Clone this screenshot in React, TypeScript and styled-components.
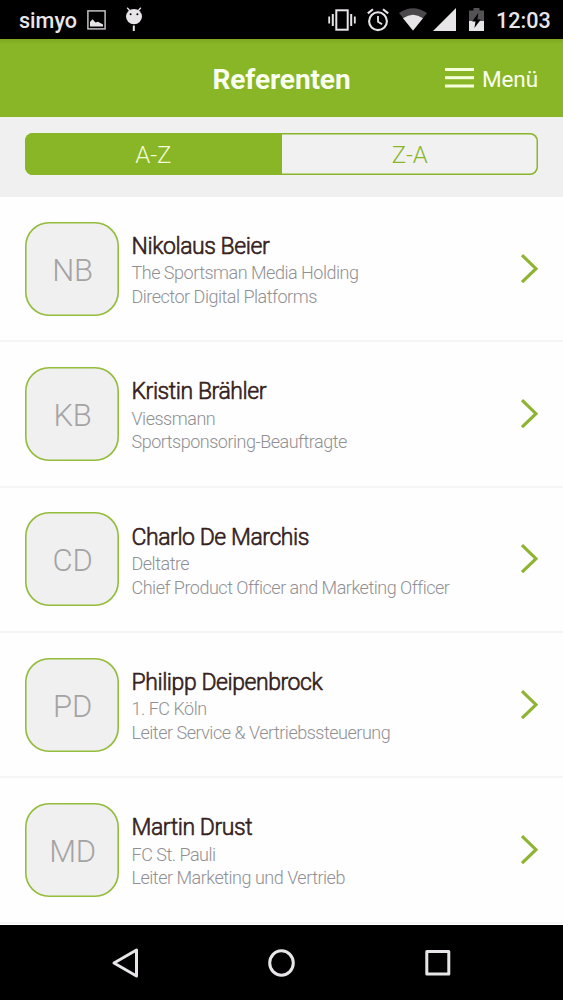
import React from 'react';
import styled, { createGlobalStyle } from 'styled-components';

const green = '#88b626';

const Global = createGlobalStyle`
  * { box-sizing: border-box; }
  body { margin: 0; background: #000; font-family: Roboto, "Liberation Sans", sans-serif; }
  svg { display: block; flex: none; }
`;

const Screen = styled.div`
  width: 563px;
  height: 1000px;
  display: flex;
  flex-direction: column;
  overflow: hidden;
  background: #fefefe;
`;

const StatusBar = styled.div`
  height: 39px;
  flex: none;
  display: flex;
  align-items: center;
  justify-content: space-between;
  padding: 0 12px 0 19px;
  background: #000;
  color: #e8e5e8;
`;

const StatusGroup = styled.div`
  display: flex;
  align-items: center;
  height: 39px;
`;

const StatusText = styled.span<{ $width: number }>`
  width: ${p => p.$width}px;
  font-size: 21.6px;
  line-height: 26px;
  font-weight: 500;
  white-space: nowrap;
  padding-top: 2px;
`;

const Clock = styled(StatusText)`
  margin-left: 12px;
`;

const Header = styled.header`
  height: 78px;
  flex: none;
  display: grid;
  grid-template-columns: 1fr auto 1fr;
  align-items: center;
  padding: 3px 25px 0;
  background: linear-gradient(#7da822, ${green} 5px);
  color: #fbffef;
`;

const Title = styled.h1`
  grid-column: 2;
  margin: 0;
  font-size: 28px;
  line-height: 34px;
  font-weight: 700;
  letter-spacing: -0.1px;
`;

const MenuButton = styled.div`
  justify-self: end;
  display: flex;
  align-items: center;
  gap: 8px;
  padding-bottom: 3px;
  font-size: 22.5px;
  line-height: 28px;
  white-space: nowrap;
`;

const MenuLabel = styled.span`
  padding-top: 1px;
  letter-spacing: -0.1px;
`;

const FilterBar = styled.div`
  height: 80px;
  flex: none;
  padding: 16px 25px 0;
  background: #f0f0f0;
`;

const Segments = styled.div`
  display: flex;
  height: 42px;
  border-radius: 8px;
  overflow: hidden;
  background: #f2f1f2;
  box-shadow: inset 0 0 0 1.5px ${green};
`;

const Segment = styled.div<{ $active?: boolean }>`
  flex: 1;
  display: flex;
  align-items: center;
  justify-content: center;
  padding-top: 2px;
  font-size: 24px;
  font-weight: 300;
  background: ${p => (p.$active ? green : 'transparent')};
  color: ${p => (p.$active ? '#f3fbdc' : green)};
`;

const List = styled.main`
  flex: 1;
  min-height: 0;
  overflow: hidden;
`;

const Row = styled.article`
  height: 145.35px;
  display: flex;
  align-items: center;
  padding: 0 25px;
  border-bottom: 2px solid #f5f5f5;
`;

const Avatar = styled.div`
  width: 94px;
  height: 94px;
  flex: none;
  display: flex;
  align-items: center;
  justify-content: center;
  padding: 3px 0 0 1px;
  box-shadow: inset 0 0 0 1.6px #94bd3c;
  border-radius: 24px;
  background: #f1f0f1;
  color: #a4a3a4;
  font-size: 31px;
  font-weight: 300;
  letter-spacing: -0.3px;
`;

const Info = styled.div`
  flex: 1;
  min-width: 0;
  margin-left: 12.5px;
  padding-top: 3px;
  white-space: nowrap;
`;

const Name = styled.h2`
  margin: 0;
  font-size: 23px;
  line-height: 30px;
  font-weight: 300;
  letter-spacing: -0.44px;
  -webkit-text-stroke: 0.6px #35201c;
  color: #35201c;
`;

const Detail = styled.p`
  margin: 0;
  font-size: 18px;
  line-height: 23.5px;
  font-weight: 300;
  letter-spacing: -0.49px;
  color: #909094;

  h2 + & { margin-top: -0.6px; }
`;

const NavBar = styled.nav`
  height: 75px;
  flex: none;
  display: flex;
  align-items: center;
  justify-content: space-between;
  padding: 0 111px;
  background: #000;
`;

const speakers = [
  { initials: 'NB', name: 'Nikolaus Beier', company: 'The Sportsman Media Holding', role: 'Director Digital Platforms' },
  { initials: 'KB', name: 'Kristin Brähler', company: 'Viessmann', role: 'Sportsponsoring-Beauftragte' },
  { initials: 'CD', name: 'Charlo De Marchis', company: 'Deltatre', role: 'Chief Product Officer and Marketing Officer' },
  { initials: 'PD', name: 'Philipp Deipenbrock', company: '1. FC Köln', role: 'Leiter Service & Vertriebssteuerung' },
  { initials: 'MD', name: 'Martin Drust', company: 'FC St. Pauli', role: 'Leiter Marketing und Vertrieb' },
];

const Glyph = styled.svg<{ $gap?: number }>`
  margin-left: ${p => p.$gap ?? 0}px;
`;

const ink = '#e8e5e8';

const PictureIcon = () => (
  <Glyph $gap={10} width="19" height="20" viewBox="0 0 19 20">
    <rect x=".9" y=".9" width="17.2" height="18" fill="none" stroke="#c4c1c4" strokeWidth="1.5" />
    <path d="M3 16.5V12L5.5 9.3 8.5 12.5 11 11.8 16 14.5v2z" fill={ink} />
  </Glyph>
);

const AndroidIcon = () => (
  <Glyph $gap={19} width="18" height="25" viewBox="0 0 18 25" fill={ink}>
    <path d="M2.2.8 5 4M15.8.8 13 4" stroke={ink} strokeWidth="1.3" />
    <ellipse cx="9" cy="9.6" rx="8" ry="7.6" />
    <rect x="7.8" y="18.5" width="2" height="5.5" />
    <circle cx="5.6" cy="7.2" r="1" fill="#000" />
    <circle cx="12.4" cy="7.2" r="1" fill="#000" />
  </Glyph>
);

const VibrateIcon = () => (
  <svg width="28" height="22" viewBox="0 0 28 22" fill="none" stroke={ink}>
    <rect x="8.3" y="1.3" width="11.4" height="19.4" strokeWidth="2" />
    <path d="M4.8 5v12M23.2 5v12" strokeWidth="2" />
    <path d="M1.2 7.5v7M26.8 7.5v7" strokeWidth="1.8" />
  </svg>
);

const AlarmIcon = () => (
  <Glyph $gap={11} width="22" height="24" viewBox="0 0 22 24" fill="none" stroke={ink}>
    <circle cx="11" cy="13.2" r="8.9" strokeWidth="2.1" />
    <path d="M11 8v5.7l4 2.6" strokeWidth="1.8" />
    <path d="M.8 5.4 6 1.2M21.2 5.4 16 1.2" strokeWidth="2.1" />
  </Glyph>
);

const WifiIcon = () => (
  <Glyph $gap={10} width="28" height="23" viewBox="0 0 28 23">
    <path d="M0 5Q14-4.5 28 5L14 22.5z" fill="#4b484b" />
    <path d="M4 10.3Q14 3 24 10.3L14 22.5z" fill={ink} />
  </Glyph>
);

const SignalIcon = () => (
  <Glyph $gap={6} width="23" height="23" viewBox="0 0 23 23">
    <path d="M23 0v23H0z" fill={ink} />
  </Glyph>
);

const BatteryIcon = () => (
  <Glyph $gap={13} width="15" height="23" viewBox="0 0 15 23">
    <path d="M4.5 0h6v2.5H15V14H0V2.5h4.5z" fill="#555255" />
    <path d="M0 13h15v10H0z" fill={ink} />
    <path d="M9.3 5 3.2 13.5h3.3L5.4 20l6.4-8.6H8.4z" fill="#000" />
  </Glyph>
);

const HamburgerIcon = () => (
  <svg width="29" height="20" viewBox="0 0 29 20" fill="#f5ffdc">
    <rect width="29" height="3" />
    <rect y="8.2" width="29" height="3" />
    <rect y="16.5" width="29" height="3" />
  </svg>
);

const Chevron = () => (
  <svg width="18" height="30" viewBox="0 0 18 30" fill="none">
    <path d="M2 1.2 16 14.7 2 28.2" stroke="#8fb433" strokeWidth="3.2" />
  </svg>
);

const navStroke = { fill: 'none', stroke: ink, strokeWidth: 3, strokeLinejoin: 'round' as const };

export default function App() {
  return (
    <Screen>
      <Global />
      <StatusBar>
        <StatusGroup>
          <StatusText $width={58}>simyo</StatusText>
          <PictureIcon />
          <AndroidIcon />
        </StatusGroup>
        <StatusGroup>
          <VibrateIcon />
          <AlarmIcon />
          <WifiIcon />
          <SignalIcon />
          <BatteryIcon />
          <Clock $width={55}>12:03</Clock>
        </StatusGroup>
      </StatusBar>
      <Header>
        <Title>Referenten</Title>
        <MenuButton>
          <HamburgerIcon />
          <MenuLabel>Menü</MenuLabel>
        </MenuButton>
      </Header>
      <FilterBar>
        <Segments>
          <Segment $active>A-Z</Segment>
          <Segment>Z-A</Segment>
        </Segments>
      </FilterBar>
      <List>
        {speakers.map(s => (
          <Row key={s.initials}>
            <Avatar>{s.initials}</Avatar>
            <Info>
              <Name>{s.name}</Name>
              <Detail>{s.company}</Detail>
              <Detail>{s.role}</Detail>
            </Info>
            <Chevron />
          </Row>
        ))}
      </List>
      <NavBar>
        <svg width="29" height="32" viewBox="0 0 29 32" {...navStroke}>
          <path d="M25.5 3v26L3 16z" />
        </svg>
        <svg width="29" height="32" viewBox="0 0 29 32" {...navStroke}>
          <ellipse cx="14.5" cy="16" rx="11.8" ry="12.2" />
        </svg>
        <svg width="29" height="32" viewBox="0 0 29 32" {...navStroke}>
          <rect x="3.8" y="4.5" width="22" height="22.5" />
        </svg>
      </NavBar>
    </Screen>
  );
}
